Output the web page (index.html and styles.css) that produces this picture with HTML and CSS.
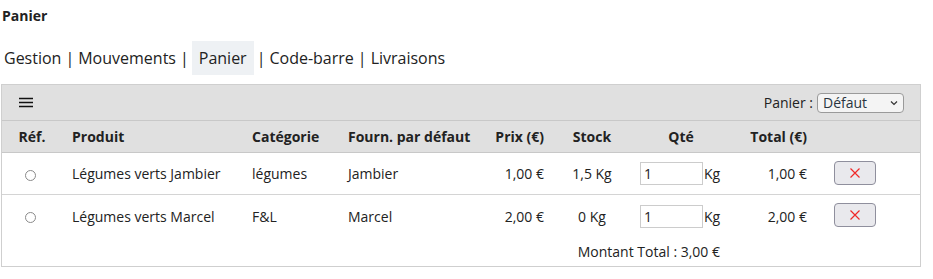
FILE: index.html
```html
<!DOCTYPE html>
<html lang="fr">
<head>
  <meta charset="UTF-8">
  <meta name="viewport" content="width=device-width, initial-scale=1.0">
  <title>Panier</title>
  <link rel="stylesheet" href="styles.css">
</head>
<body>
  <h1 class="title">Panier</h1>

  <nav class="tabs">
    <a href="#">Gestion</a><span class="sep">|</span>
    <a href="#">Mouvements</a><span class="sep">|</span>
    <a href="#" class="active">Panier</a><span class="sep">|</span>
    <a href="#">Code-barre</a><span class="sep">|</span>
    <a href="#">Livraisons</a>
  </nav>

  <div class="cart">
    <div class="toolbar">
      <span class="burger">
        <svg width="14" height="11" viewBox="0 0 14 11"><path d="M0 1.5h14M0 5.5h14M0 9.5h14" stroke="#111" stroke-width="1.4"/></svg>
      </span>
      <label class="cart-select">Panier :
        <span class="select">Défaut
          <svg width="8" height="6" viewBox="0 0 8 6"><path d="M1 1.5l3 3 3-3" fill="none" stroke="#333" stroke-width="1.2"/></svg>
        </span>
      </label>
    </div>

    <table class="items">
      <colgroup>
        <col style="width:60px"><col style="width:182px"><col style="width:96px">
        <col style="width:141px"><col style="width:71px"><col style="width:80px">
        <col style="width:98px"><col style="width:85px"><col style="width:105px">
      </colgroup>
      <thead>
        <tr>
          <th class="center">Réf.</th>
          <th>Produit</th>
          <th>Catégorie</th>
          <th>Fourn. par défaut</th>
          <th class="right">Prix (€)</th>
          <th class="center">Stock</th>
          <th class="center">Qté</th>
          <th class="right">Total (€)</th>
          <th></th>
        </tr>
      </thead>
      <tbody>
        <tr>
          <td class="center"><span class="radio"></span></td>
          <td>Légumes verts Jambier</td>
          <td>légumes</td>
          <td>Jambier</td>
          <td class="right">1,00 €</td>
          <td class="center">1,5 Kg</td>
          <td class="qty"><input type="text" value="1"><span>Kg</span></td>
          <td class="right">1,00 €</td>
          <td class="action">
            <button class="remove"><svg width="10" height="10" viewBox="0 0 10 10"><path d="M0.5 0.5l9 9M9.5 0.5l-9 9" stroke="#f02828" stroke-width="1.2"/></svg></button>
          </td>
        </tr>
        <tr>
          <td class="center"><span class="radio"></span></td>
          <td>Légumes verts Marcel</td>
          <td>F&amp;L</td>
          <td>Marcel</td>
          <td class="right">2,00 €</td>
          <td class="center">0 Kg</td>
          <td class="qty"><input type="text" value="1"><span>Kg</span></td>
          <td class="right">2,00 €</td>
          <td class="action">
            <button class="remove"><svg width="10" height="10" viewBox="0 0 10 10"><path d="M0.5 0.5l9 9M9.5 0.5l-9 9" stroke="#f02828" stroke-width="1.2"/></svg></button>
          </td>
        </tr>
      </tbody>
      <tfoot>
        <tr>
          <td colspan="7" class="right total">Montant Total : 3,00 €</td>
          <td colspan="2"></td>
        </tr>
      </tfoot>
    </table>
  </div>
</body>
</html>
```

FILE: styles.css
```css
body {
  font-family: 'Open Sans', 'Noto Sans', sans-serif;
  font-size: 14px;
  color: #222;
  margin: 0;
  padding: 0 2px;
}
.title {
  font-size: 14px;
  font-weight: 700;
  margin: 6px 0 0;
  line-height: 20px;
}
.tabs {
  display: flex;
  align-items: center;
  margin: 15px 0 9px;
  font-size: 16px;
  height: 34px;
}
.tabs a {
  color: #222;
  text-decoration: none;
  padding: 0 2px;
  line-height: 34px;
}
.tabs a.active {
  background: #eef1f4;
  padding: 0 7px;
  margin: 0 1px;
}
.tabs .sep {
  margin: 0 2px;
}
.cart {
  margin-left: -1px;
  width: 918px;
  border: 1px solid #cfcfcf;
}
.toolbar {
  display: flex;
  align-items: center;
  justify-content: space-between;
  height: 35px;
  background: #e0e0e0;
  padding: 0 16px 0 17px;
}
.burger {
  display: flex;
}
.cart-select {
  display: flex;
  align-items: center;
  gap: 4px;
  font-size: 14px;
}
.select {
  display: flex;
  align-items: center;
  justify-content: space-between;
  width: 75px;
  height: 18px;
  padding: 0 5px;
  border: 1px solid #9a9a9a;
  border-radius: 4px;
  background: #f4f4f4;
  color: #2a3440;
}
.items {
  width: 100%;
  border-collapse: collapse;
  table-layout: fixed;
}
.items th {
  background: #e0e0e0;
  font-weight: 700;
  text-align: left;
  height: 31px;
  padding: 0 8px;
  border-top: 1px solid #c8c8c8;
  border-bottom: 1px solid #c8c8c8;
  white-space: nowrap;
}
.items td {
  height: 41px;
  padding: 0 8px;
  border-bottom: 1px solid #d4d4d4;
  white-space: nowrap;
}
.items tbody tr:last-child td {
  height: 42px;
  border-bottom: none;
}
.items td:nth-child(2),
.items th:nth-child(2) {
  padding-left: 10px;
}
.items .center {
  text-align: center;
}
.items .right {
  text-align: right;
}
.radio {
  display: inline-block;
  width: 9px;
  height: 9px;
  margin-left: -3px;
  border: 1px solid #8a8a8a;
  border-radius: 50%;
  vertical-align: middle;
}
.qty input {
  width: 55px;
  height: 19px;
  padding: 1px 3px;
  border: 1px solid #cccccc;
  font: inherit;
  color: #222;
  vertical-align: middle;
}
.qty span {
  vertical-align: middle;
  margin-left: 1px;
}
.action {
  padding-left: 19px !important;
}
.remove {
  display: flex;
  align-items: center;
  justify-content: center;
  width: 42px;
  height: 24px;
  margin-top: -2px;
  background: #e9e9ed;
  border: 1px solid #8f8f9d;
  border-radius: 4px;
  padding: 0;
  cursor: pointer;
}
.items tfoot td {
  height: 29px;
  border-bottom: none;
}
.total {
  padding-right: 10px !important;
}
```
